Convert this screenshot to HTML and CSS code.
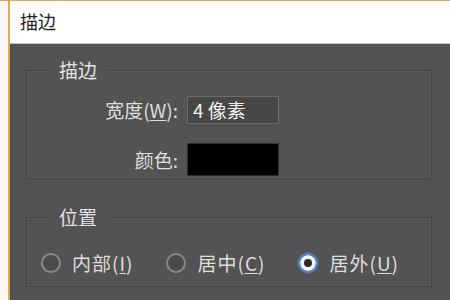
FILE: index.html
```html
<!DOCTYPE html>
<html lang="zh">
<head>
<meta charset="utf-8">
<link rel="stylesheet" href="styles.css">
</head>
<body>
<div class="window">
  <div class="titlebar">描边</div>
  <div class="content">
    <fieldset class="group stroke">
      <legend>描边</legend>
      <div class="form">
        <label class="label">宽度(<u>W</u>):</label>
        <div class="input">4 像素</div>
        <label class="label">颜色:</label>
        <div class="swatch"></div>
      </div>
    </fieldset>
    <fieldset class="group position">
      <legend>位置</legend>
      <div class="radios">
        <div class="radio"><span class="dot"></span><span class="rtext">内部(<u>I</u>)</span></div>
        <div class="radio"><span class="dot"></span><span class="rtext">居中(<u>C</u>)</span></div>
        <div class="radio"><span class="dot checked"></span><span class="rtext">居外(<u>U</u>)</span></div>
      </div>
    </fieldset>
  </div>
</div>
</body>
</html>
```
FILE: styles.css
```css
html, body {
  margin: 0;
  padding: 0;
  height: 100%;
}
body {
  background: #f7f8f6;
  border-top: 1px solid #e2a458;
  box-sizing: border-box;
  font-family: "Noto Sans CJK SC", "Noto Sans", sans-serif;
  overflow: hidden;
}
.window {
  margin-left: 8px;
  height: 100%;
  border-left: 2px solid #e8a65a;
  display: flex;
  flex-direction: column;
}
.titlebar {
  height: 42px;
  background: #ffffff;
  border-bottom: 1px solid #c9c9c9;
  padding-left: 10px;
  font-size: 18px;
  line-height: 40px;
  color: #1e1e1e;
}
.content {
  flex: 1;
  background: #535353;
  border-left: 1px solid #3e4850;
  padding: 13px 18px 0 15px;
  color: #dedede;
  font-size: 19px;
}
.group {
  margin: 0;
  border: 1px solid #434343;
  box-shadow: inset 0 0 0 1px #5c5c5c;
  padding: 0;
}
.group legend {
  margin-left: 21px;
  padding: 0 11px;
  background: #535353;
  line-height: 26px;
  color: #e2e2e2;
}
.stroke {
  height: 122px;
  box-sizing: border-box;
}
.form {
  display: grid;
  grid-template-columns: 151px 92px;
  column-gap: 9px;
  row-gap: 19px;
  align-items: center;
  padding-top: 13px;
}
.label {
  text-align: right;
  line-height: 28px;
}
.input {
  height: 28px;
  box-sizing: border-box;
  background: #474747;
  border: 1px solid #6b6b6b;
  line-height: 25px;
  padding-left: 5px;
  color: #f0f0f0;
}
.swatch {
  height: 33px;
  box-sizing: border-box;
  background: #000;
  border: 1px solid #2e2e2e;
}
.position {
  margin-top: 25px;
  height: 83px;
  box-sizing: border-box;
}
.radios {
  display: flex;
  align-items: center;
  padding: 19px 0 0 14px;
  gap: 33px;
}
.radio {
  display: flex;
  align-items: center;
  gap: 11px;
}
.rtext {
  letter-spacing: 1px;
}
.dot {
  width: 20px;
  height: 20px;
  box-sizing: border-box;
  border-radius: 50%;
  border: 2px solid #8a8a8a;
  background: #4b4b4b;
}
.dot.checked {
  border: 2px solid #4f86c8;
  background: #2a2a2a;
  box-shadow: inset 0 0 0 4px #f4f4f4, 0 0 2px #4f86c8;
}
u {
  text-underline-offset: 2px;
}
```
